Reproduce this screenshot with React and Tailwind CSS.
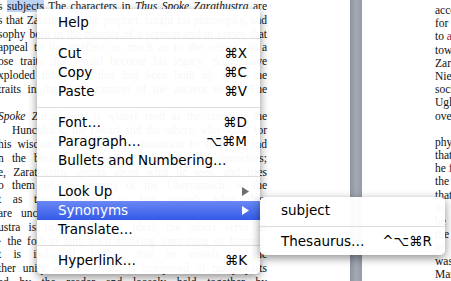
import React from "react";

const leftLines = [
  null,
  "s that Zarathustra, the prophet, taught his philosophy, and",
  "sophy both in the manner of a sermon and in verses that",
  "appeal to the intellect as much as to the senses, in a",
  "ose traits that would become his legacy. Some have",
  "xploded the myths that had been built up about the",
  "traits in the wider context of the ancient world. The",
  "",
  "spoke",
  "Hunchback, the Dwarf and the others, who stand for",
  "his wisdom down from the mountain to share it, and",
  "n the book he encounters followers and detractors;",
  "e, Zarathustra, speaks about what he sees, and tries",
  "o them of the coming of the Übermensch, to the",
  "t as their response to him reveals what they",
  "are unclear about. The style of the work is that",
  "ustra is held up as the ideal; the others serve as",
  "· the foil to him, each showing something of himself.",
  "t is indicated, further, that he travels to the",
  "ther unity and the work is composed of many parts",
  "ed by the reader and loosely held together by",
];

const rightLines = [
  "according",
  "for",
  "to an",
  "towards",
  "Zarathustra",
  "Nietzsche",
  "society",
  "Ugliest",
  "overcome",
  "",
  "physical",
  "that",
  "he finds",
  "the",
  "that",
  "in",
  "he",
  "the",
  "to",
  "was",
  "Many",
];

const menu = [
  { label: "Help" },
  "sep",
  { label: "Cut", key: "⌘X" },
  { label: "Copy", key: "⌘C" },
  { label: "Paste", key: "⌘V" },
  "sep",
  { label: "Font…", key: "⌘D" },
  { label: "Paragraph…", key: "⌥⌘M" },
  { label: "Bullets and Numbering…" },
  "sep",
  { label: "Look Up", sub: true },
  { label: "Synonyms", sub: true, active: true },
  { label: "Translate…" },
  "sep",
  { label: "Hyperlink…", key: "⌘K" },
];

function Arrow({ white }) {
  return (
    <svg width="7" height="9" viewBox="0 0 7 9" className="mr-[-2px]">
      <path d="M0 0 L7 4.5 L0 9 Z" fill={white ? "#ffffff" : "#6e6e6e"} />
    </svg>
  );
}

function Menu({ items, className }) {
  return (
    <div
      className={`absolute bg-white/[0.96] py-[4px] font-['DejaVu_Sans',sans-serif] text-[13.5px] text-black shadow-[0_3px_10px_rgba(0,0,0,0.45)] ${className}`}
    >
      {items.map((it, i) =>
        it === "sep" ? (
          <div key={i} className="flex h-[12px] items-center">
            <div className="h-px w-full bg-[#dcdcdc]" />
          </div>
        ) : (
          <div
            key={i}
            className={`flex h-[19px] items-center justify-between pl-[21px] pr-[13px] ${
              it.active ? "bg-gradient-to-b from-[#6a87f3] to-[#3459e8] text-white" : ""
            }`}
          >
            <span>{it.label}</span>
            {it.key && <span>{it.key}</span>}
            {it.sub && <Arrow white={it.active} />}
          </div>
        )
      )}
    </div>
  );
}

export default function App() {
  return (
    <div className="relative flex h-[281px] w-[451px] overflow-hidden bg-white font-['Liberation_Serif',serif] text-[11.5px] text-[#111]">
      <div className="w-[350px] shrink-0">
        <div className="-ml-[2px] w-[269px]">
          <div className="h-[13.8px] whitespace-nowrap leading-[13.8px] text-justify [text-align-last:justify]">
            s <span className="bg-[#bcd3f3]">subjects</span> The characters in <i>Thus Spoke Zarathustra</i> are
          </div>
          {leftLines.slice(1).map((l, i) =>
            l === "spoke" ? (
              <div key={i} className="h-[13.8px] whitespace-nowrap leading-[13.8px] text-justify [text-align-last:justify]">
                <i>Spoke Zarathustra</i> is widely read as the story of the
              </div>
            ) : (
              <div
                key={i}
                className={`h-[13.8px] whitespace-nowrap leading-[13.8px] ${
                  l ? "text-justify [text-align-last:justify]" : ""
                } ${i === 8 ? "pl-[14px]" : ""}`}
              >
                {l}
              </div>
            )
          )}
        </div>
      </div>
      <div className="w-[12px] shrink-0 bg-gradient-to-r from-[#8d939e] via-[#a4a9b3] to-[#959aa5]" />
      <div className="flex-1 pl-[73px] pt-[4px]">
        {rightLines.map((l, i) => (
          <div key={i} className="h-[13.2px] whitespace-nowrap leading-[13.2px]">
            {i === 2 ? (
              <>
                to <span className="text-[#b01a1a]">an</span>
              </>
            ) : i === 12 ? (
              <>
                he <span className="text-[#b01a1a]">finds</span>
              </>
            ) : (
              l
            )}
          </div>
        ))}
      </div>

      <Menu items={menu} className="left-[37px] top-[9px] w-[223px] rounded-b-[5px]" />
      <Menu
        items={[{ label: "subject" }, "sep", { label: "Thesaurus…", key: "^⌥⌘R" }]}
        className="left-[260px] top-[197px] w-[185px] rounded-[5px]"
      />
    </div>
  );
}
